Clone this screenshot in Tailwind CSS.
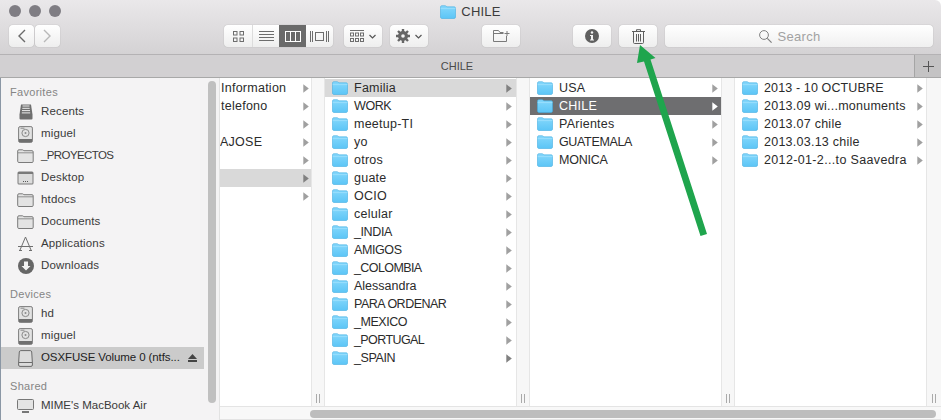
<!DOCTYPE html>
<html><head><meta charset="utf-8"><script src="https://cdn.jsdelivr.net/npm/@tailwindcss/browser@4"></script></head>
<body class="m-0 overflow-hidden bg-white">
<svg class="absolute w-0 h-0"><defs>
<linearGradient id="fg" x1="0" y1="0" x2="0" y2="1"><stop offset="0" stop-color="#85d8fc"/><stop offset="1" stop-color="#5cc5f6"/></linearGradient>
<symbol id="f" viewBox="0 0 16 14"><path d="M.5 2.200C.5 1.200 1 .7 2 .7h3.200c.8 0 1 .9 1.800 1.100h7c1 0 1.500.5 1.500 1.500v8.800c0 .9-.5 1.400-1.500 1.400H2c-1 0-1.500-.5-1.500-1.400z" fill="url(#fg)" stroke="#45aee2" stroke-width=".6"/><path d="M.6 3.600h14.800" stroke="#a5e3fd" stroke-width=".7"/></symbol>
<symbol id="a" viewBox="0 0 6 9"><path d="M.3.300 5.800 4.500.3 8.700z" fill="currentColor"/></symbol>
<symbol id="sf" viewBox="0 0 17 14"><path d="M.7 2c0-.8.4-1.200 1.200-1.200h3.600c.7 0 .8.900 1.500.900h8c.8 0 1.200.4 1.200 1.200v9.400c0 .8-.4 1.200-1.200 1.200H1.900c-.8 0-1.200-.4-1.200-1.200z" fill="#e3e3e3" stroke="#7b7b7b"/><path d="M1 3.800h15" stroke="#7b7b7b" stroke-width=".8"/></symbol>
<symbol id="d" viewBox="0 0 15 17"><rect x=".6" y=".6" width="13.800" height="15.800" rx="1.500" fill="#e2e2e2" stroke="#7c7c7c"/><circle cx="7.500" cy="7" r="3.600" fill="none" stroke="#8a8a8a"/><circle cx="7.500" cy="7" r="1" fill="#8a8a8a"/><path d="M2.500 2.200h4" stroke="#8a8a8a"/><rect x="1" y="13" width="13" height="3" fill="#6f6f6f"/></symbol>
</defs></svg>

<div class="relative w-[941px] h-[420px] overflow-hidden bg-white font-['Liberation_Sans',Arial,sans-serif]">
  <!-- title + toolbar -->
  <div class="h-[55px] bg-gradient-to-b from-[#eae8ea] to-[#d4d2d4] border-b border-[#b4b2b4] rounded-tr-md flex flex-col">
    <div class="h-[23px] relative flex items-center justify-center">
      <div class="absolute left-[9px] top-[5px] flex gap-[8px]">
        <div class="w-[12px] h-[12px] rounded-full bg-[#7f7d83]"></div>
        <div class="w-[12px] h-[12px] rounded-full bg-[#7f7d83]"></div>
        <div class="w-[12px] h-[12px] rounded-full bg-[#7f7d83]"></div>
      </div>
      <div class="flex items-center gap-[5px]">
        <svg class="w-[16px] h-[14px]"><use href="#f"/></svg>
        <span class="text-[13px] text-[#3c3c3c] tracking-[.2px]">CHILE</span>
      </div>
    </div>
    <div class="h-[22px] mt-[2px] flex pl-[9px] text-[#6a6a6a]">
      <div class="w-[25px] rounded-[4px] bg-gradient-to-b from-white to-[#eeeeee] shadow-[0_0_1px_#8f8f8f] flex items-center justify-center">
        <svg width="9" height="14" viewBox="0 0 9 14"><path d="M8 1 2 7l6 6" fill="none" stroke="#6a6a6a" stroke-width="1.400"/></svg>
      </div>
      <div class="w-[25px] ml-[1px] rounded-[4px] bg-gradient-to-b from-white to-[#eeeeee] shadow-[0_0_1px_#8f8f8f] flex items-center justify-center">
        <svg width="9" height="14" viewBox="0 0 9 14"><path d="M1 1l6 6-6 6" fill="none" stroke="#b8b8b8" stroke-width="1.400"/></svg>
      </div>
      <div class="ml-[164px] w-[109px] flex rounded-[4px] overflow-hidden bg-gradient-to-b from-white to-[#eeeeee] shadow-[0_0_1px_#8f8f8f]">
        <div class="w-[29px] border-r border-[#dcdcdc] flex items-center justify-center">
          <svg width="11" height="11" viewBox="0 0 11 11" fill="none" stroke="#6d6d6d"><rect x=".5" y=".5" width="3.500" height="3.500"/><rect x="7" y=".5" width="3.500" height="3.500"/><rect x=".5" y="7" width="3.500" height="3.500"/><rect x="7" y="7" width="3.500" height="3.500"/></svg>
        </div>
        <div class="w-[26px] flex items-center justify-center">
          <svg width="15" height="11" viewBox="0 0 15 11" stroke="#6d6d6d"><path d="M0 .5h15M0 3.500h15M0 6.500h15M0 9.500h15"/></svg>
        </div>
        <div class="w-[27px] bg-[#6a6a6a] flex items-center justify-center">
          <svg width="16" height="11" viewBox="0 0 16 11" fill="none" stroke="#fff"><rect x=".5" y=".5" width="15" height="10"/><path d="M5.500 0v11M10.500 0v11"/></svg>
        </div>
        <div class="w-[27px] flex items-center justify-center">
          <svg width="19" height="11" viewBox="0 0 19 11" fill="none" stroke="#6d6d6d"><rect x="5.500" y="1.500" width="8" height="8"/><path d="M.5 0v11M2.500 0v11M16.500 0v11M18.500 0v11"/></svg>
        </div>
      </div>
      <div class="ml-[11px] w-[38px] rounded-[4px] bg-gradient-to-b from-white to-[#eeeeee] shadow-[0_0_1px_#8f8f8f] flex items-center justify-center gap-[5px]">
        <svg width="14" height="13" viewBox="0 0 14 13" fill="none" stroke="#6d6d6d"><path d="M0 .5h14"/><rect x=".5" y="3" width="3" height="3"/><rect x="5.500" y="3" width="3" height="3"/><rect x="10.500" y="3" width="3" height="3"/><rect x=".5" y="8.500" width="3" height="3"/><rect x="5.500" y="8.500" width="3" height="3"/><rect x="10.500" y="8.500" width="3" height="3"/></svg>
        <svg width="7" height="5" viewBox="0 0 7 5"><path d="M.5 1 3.500 4l3-3" fill="none" stroke="#555" stroke-width="1.200"/></svg>
      </div>
      <div class="ml-[8px] w-[38px] rounded-[4px] bg-gradient-to-b from-white to-[#eeeeee] shadow-[0_0_1px_#8f8f8f] flex items-center justify-center gap-[5px]">
        <svg width="14" height="14" viewBox="0 0 14 14"><circle cx="7" cy="7" r="3.500" fill="none" stroke="#666" stroke-width="3"/><path d="M7 0v14M0 7h14M2 2l10 10M12 2 2 12" stroke="#666" stroke-width="2.400"/><circle cx="7" cy="7" r="1.800" fill="#f5f5f5"/></svg>
        <svg width="7" height="5" viewBox="0 0 7 5"><path d="M.5 1 3.500 4l3-3" fill="none" stroke="#555" stroke-width="1.200"/></svg>
      </div>
      <div class="ml-[54px] w-[38px] rounded-[4px] bg-gradient-to-b from-white to-[#eeeeee] shadow-[0_0_1px_#8f8f8f] flex items-center justify-center">
        <svg width="17" height="12" viewBox="0 0 17 12" fill="none" stroke="#7a7a7a"><path d="M.5 11.500V.5h5l1.500 2h3.500M13.500 6v5.500H.5M.5 3.500h10M14 1v5M11.500 3.500h5"/></svg>
      </div>
      <div class="ml-[53px] w-[38px] rounded-[4px] bg-gradient-to-b from-white to-[#eeeeee] shadow-[0_0_1px_#8f8f8f] flex items-center justify-center">
        <svg width="14" height="14" viewBox="0 0 14 14"><circle cx="7" cy="7" r="7" fill="#5f5f5f"/><circle cx="7" cy="3.500" r="1.200" fill="#f3f3f3"/><path d="M5 6h3v4.500h1v1H5v-1h1V7H5z" fill="#f3f3f3"/></svg>
      </div>
      <div class="ml-[8px] w-[38px] rounded-[4px] bg-gradient-to-b from-white to-[#eeeeee] shadow-[0_0_1px_#8f8f8f] flex items-center justify-center">
        <svg width="13" height="15" viewBox="0 0 13 15" fill="none" stroke="#5f5f5f"><path d="M0 2.500h13M4.500 2.500V.7h4v1.800M1.500 2.500v11c0 .6.400 1 1 1h8c.6 0 1-.4 1-1v-11M4.500 5v7.500M6.500 5v7.500M8.500 5v7.500"/></svg>
      </div>
      <div class="ml-[8px] w-[268px] pr-[19px] rounded-[4px] bg-gradient-to-b from-white to-[#f0f0f0] shadow-[0_0_1px_#8f8f8f] flex items-center justify-center gap-[6px] text-[13px] leading-[24px] text-[#a2a2a2] tracking-[.3px]">
        <svg width="13" height="13" viewBox="0 0 13 13" fill="none" stroke="#808080"><circle cx="5" cy="5" r="4.400"/><path d="m8.300 8.300 4.300 4.300" stroke-width="1.200"/></svg>
        <span class="pt-[2px]">Search</span>
      </div>
    </div>
  </div>
  <!-- tab bar -->
  <div class="h-[23px] bg-[#d2d0d2] border-b border-[#a8a8a8] flex">
    <div class="flex-1 text-center text-[11px] leading-[22px] text-[#4a4a4a]">CHILE</div>
    <div class="w-[27px] bg-[#c4c3c4] border-l border-[#a5a5a5] flex items-center justify-center">
      <svg width="11" height="11" viewBox="0 0 11 11" stroke="#555"><path d="M5.500 0v11M0 5.500h11"/></svg>
    </div>
  </div>
  <!-- main -->
  <div class="h-[342px] flex">
    <!-- sidebar -->
    <div class="relative w-[220px] h-full overflow-hidden whitespace-nowrap bg-[#f4f3f4] border-l border-[#8b97a5] border-r border-r-[#e2e2e2] text-[11.500px] text-[#3a3a3a] tracking-[.15px] pt-[7px]">
      <div class="h-[14px] leading-[14px] pl-[9px] text-[11px] text-[#858585] mb-[2px] tracking-[.3px]">Favorites</div>
      <div class="h-[22px] flex items-center"><div class="w-[40px] flex justify-center pl-[9px]"><svg width="14" height="16" viewBox="0 0 14 16"><path d="M2 .5h10l1.500 10v4a1 1 0 0 1-1 1h-11a1 1 0 0 1-1-1v-4z" fill="#6e6e6e"/><path d="M3.500 2h7M3.300 4.300h7.400M3 6.600h8M2.800 8.900h8.400" stroke="#eee"/></svg></div><span>Recents</span></div>
      <div class="h-[22px] flex items-center"><div class="w-[40px] flex justify-center pl-[9px]"><svg width="15" height="17"><use href="#d"/></svg></div><span>miguel</span></div>
      <div class="h-[22px] flex items-center"><div class="w-[40px] flex justify-center pl-[9px]"><svg width="17" height="14"><use href="#sf"/></svg></div><span class="tracking-[-.6px]">_PROYECTOS</span></div>
      <div class="h-[22px] flex items-center"><div class="w-[40px] flex justify-center pl-[9px]"><svg width="17" height="14" viewBox="0 0 17 14"><rect x=".5" y=".5" width="16" height="13" rx="1.500" fill="#7a7a7a"/><rect x="1.500" y="3" width="14" height="9.500" fill="#dcdcdc"/><path d="M6 10.500h1M8 10.500h1M10 10.500h1" stroke="#555"/></svg></div><span>Desktop</span></div>
      <div class="h-[22px] flex items-center"><div class="w-[40px] flex justify-center pl-[9px]"><svg width="17" height="14"><use href="#sf"/></svg></div><span>htdocs</span></div>
      <div class="h-[22px] flex items-center"><div class="w-[40px] flex justify-center pl-[9px]"><svg width="17" height="14"><use href="#sf"/></svg></div><span>Documents</span></div>
      <div class="h-[22px] flex items-center"><div class="w-[40px] flex justify-center pl-[9px]"><svg width="17" height="16" viewBox="0 0 17 16" fill="none" stroke="#6f6f6f"><path d="M8.500 1 3 14M8.500 1l5.500 13M1 10.500h15M5 14.500h-3M15 14.500h-3"/></svg></div><span>Applications</span></div>
      <div class="h-[22px] flex items-center"><div class="w-[40px] flex justify-center pl-[9px]"><svg width="16" height="16" viewBox="0 0 16 16"><circle cx="8" cy="8" r="8" fill="#666"/><path d="M6 3.500h4V8h2.500L8 12.500 3.500 8H6z" fill="#f4f4f4"/></svg></div><span>Downloads</span></div>
      <div class="h-[14px] leading-[14px] pl-[9px] text-[11px] text-[#858585] mt-[10px] mb-[2px] tracking-[.3px]">Devices</div>
      <div class="h-[22px] flex items-center"><div class="w-[40px] flex justify-center pl-[9px]"><svg width="15" height="17"><use href="#d"/></svg></div><span>hd</span></div>
      <div class="h-[22px] flex items-center"><div class="w-[40px] flex justify-center pl-[9px]"><svg width="15" height="17"><use href="#d"/></svg></div><span>miguel</span></div>
      <div class="h-[22px] w-[203px] bg-[#cbcbcb] flex items-center text-[#222]"><div class="w-[40px] flex justify-center pl-[9px]"><svg width="15" height="17" viewBox="0 0 15 17"><path d="M2.800.6h9.400c.8 0 1.300.5 1.500 1.300l.7 11.100v2c0 .8-.5 1.400-1.400 1.400H2c-.9 0-1.400-.6-1.400-1.400v-2l.7-11.100C1.500 1.100 2 .6 2.800.6z" fill="#dcdcdc" stroke="#6a6a6a"/><path d="M1 12.500h13" stroke="#6a6a6a"/></svg></div><span class="flex-1 tracking-[-.1px]">OSXFUSE Volume 0 (ntfs...</span><svg class="mr-[7px]" width="9" height="8" viewBox="0 0 9 8" fill="#444"><path d="M4.500 0 9 5H0zM0 6h9v2H0z"/></svg></div>
      <div class="h-[14px] leading-[14px] pl-[9px] text-[11px] text-[#858585] mt-[10px] mb-[2px] tracking-[.3px]">Shared</div>
      <div class="h-[22px] flex items-center"><div class="w-[40px] flex justify-center pl-[9px]"><svg width="17" height="14" viewBox="0 0 17 14"><rect x=".5" y=".5" width="16" height="10" rx="1" fill="#e4e4e4" stroke="#777"/><path d="M5 13h7" stroke="#777" stroke-width="2"/></svg></div><span class="tracking-[0px]">MIME's MacBook Air</span></div>
      <div class="h-[22px] flex items-center"><div class="w-[40px] flex justify-center pl-[9px]"><svg width="17" height="14" viewBox="0 0 17 14"><rect x=".5" y=".5" width="16" height="10" rx="1" fill="#e4e4e4" stroke="#777"/><path d="M5 13h7" stroke="#777" stroke-width="2"/></svg></div></div>
      <div class="absolute left-[207px] top-[3px] w-[8px] h-[322px] rounded-full bg-[#c0c0c0]"></div>
    </div>
    <!-- browser -->
    <div class="flex-1 min-w-0 flex flex-col text-[12.500px] text-[#2b2b2b] tracking-[.25px]">
      <div class="h-[328px] flex">
        <!-- col1 -->
        <div class="w-[91px] pt-px shrink-0">
          <div class="h-[18px] flex items-center justify-between pl-px pr-[2px]"><span>Information</span><svg class="w-[6px] h-[9px] text-[#a0a0a0]"><use href="#a"/></svg></div>
          <div class="h-[18px] flex items-center justify-between pl-px pr-[2px]"><span>telefono</span><svg class="w-[6px] h-[9px] text-[#a0a0a0]"><use href="#a"/></svg></div>
          <div class="h-[18px] flex items-center justify-end pr-[2px]"><svg class="w-[6px] h-[9px] text-[#a0a0a0]"><use href="#a"/></svg></div>
          <div class="h-[18px] flex items-center justify-between pr-[2px]"><span>AJOSE</span><svg class="w-[6px] h-[9px] text-[#a0a0a0]"><use href="#a"/></svg></div>
          <div class="h-[18px] flex items-center justify-end pr-[2px]"><svg class="w-[6px] h-[9px] text-[#a0a0a0]"><use href="#a"/></svg></div>
          <div class="h-[18px] flex items-center justify-end pr-[2px] bg-[#d9d9d9]"><svg class="w-[6px] h-[9px] text-[#808080]"><use href="#a"/></svg></div>
          <div class="h-[18px] flex items-center justify-end pr-[2px]"><svg class="w-[6px] h-[9px] text-[#a0a0a0]"><use href="#a"/></svg></div>
        </div>
        <!-- div -->
        <div class="w-[14px] shrink-0 bg-[#f7f7f7] border-x border-[#e6e6e6] flex items-end justify-center pb-[3px]"><svg width="4" height="9" stroke="#aaa"><path d="M.5 0v9M3.500 0v9"/></svg></div>
        <!-- col2 -->
        <div class="w-[191px] pt-px shrink-0">
          <div class="h-[18px] flex items-center pl-[7px] pr-[4px] bg-[#d9d9d9]"><svg class="w-[16px] h-[14px] mr-[6px]"><use href="#f"/></svg><span class="flex-1">Familia</span><svg class="w-[6px] h-[9px] text-[#808080]"><use href="#a"/></svg></div>
          <div class="h-[18px] flex items-center pl-[7px] pr-[4px]"><svg class="w-[16px] h-[14px] mr-[6px]"><use href="#f"/></svg><span class="flex-1 tracking-[-.4px]">WORK</span><svg class="w-[6px] h-[9px] text-[#a0a0a0]"><use href="#a"/></svg></div>
          <div class="h-[18px] flex items-center pl-[7px] pr-[4px]"><svg class="w-[16px] h-[14px] mr-[6px]"><use href="#f"/></svg><span class="flex-1">meetup-TI</span><svg class="w-[6px] h-[9px] text-[#a0a0a0]"><use href="#a"/></svg></div>
          <div class="h-[18px] flex items-center pl-[7px] pr-[4px]"><svg class="w-[16px] h-[14px] mr-[6px]"><use href="#f"/></svg><span class="flex-1">yo</span><svg class="w-[6px] h-[9px] text-[#a0a0a0]"><use href="#a"/></svg></div>
          <div class="h-[18px] flex items-center pl-[7px] pr-[4px]"><svg class="w-[16px] h-[14px] mr-[6px]"><use href="#f"/></svg><span class="flex-1">otros</span><svg class="w-[6px] h-[9px] text-[#a0a0a0]"><use href="#a"/></svg></div>
          <div class="h-[18px] flex items-center pl-[7px] pr-[4px]"><svg class="w-[16px] h-[14px] mr-[6px]"><use href="#f"/></svg><span class="flex-1">guate</span><svg class="w-[6px] h-[9px] text-[#a0a0a0]"><use href="#a"/></svg></div>
          <div class="h-[18px] flex items-center pl-[7px] pr-[4px]"><svg class="w-[16px] h-[14px] mr-[6px]"><use href="#f"/></svg><span class="flex-1">OCIO</span><svg class="w-[6px] h-[9px] text-[#a0a0a0]"><use href="#a"/></svg></div>
          <div class="h-[18px] flex items-center pl-[7px] pr-[4px]"><svg class="w-[16px] h-[14px] mr-[6px]"><use href="#f"/></svg><span class="flex-1">celular</span><svg class="w-[6px] h-[9px] text-[#a0a0a0]"><use href="#a"/></svg></div>
          <div class="h-[18px] flex items-center pl-[7px] pr-[4px]"><svg class="w-[16px] h-[14px] mr-[6px]"><use href="#f"/></svg><span class="flex-1 tracking-[-.4px]">_INDIA</span><svg class="w-[6px] h-[9px] text-[#a0a0a0]"><use href="#a"/></svg></div>
          <div class="h-[18px] flex items-center pl-[7px] pr-[4px]"><svg class="w-[16px] h-[14px] mr-[6px]"><use href="#f"/></svg><span class="flex-1 tracking-[-.4px]">AMIGOS</span><svg class="w-[6px] h-[9px] text-[#a0a0a0]"><use href="#a"/></svg></div>
          <div class="h-[18px] flex items-center pl-[7px] pr-[4px]"><svg class="w-[16px] h-[14px] mr-[6px]"><use href="#f"/></svg><span class="flex-1 tracking-[-.6px]">_COLOMBIA</span><svg class="w-[6px] h-[9px] text-[#a0a0a0]"><use href="#a"/></svg></div>
          <div class="h-[18px] flex items-center pl-[7px] pr-[4px]"><svg class="w-[16px] h-[14px] mr-[6px]"><use href="#f"/></svg><span class="flex-1 tracking-[0px]">Alessandra</span><svg class="w-[6px] h-[9px] text-[#a0a0a0]"><use href="#a"/></svg></div>
          <div class="h-[18px] flex items-center pl-[7px] pr-[4px]"><svg class="w-[16px] h-[14px] mr-[6px]"><use href="#f"/></svg><span class="flex-1 tracking-[-.5px]">PARA ORDENAR</span><svg class="w-[6px] h-[9px] text-[#a0a0a0]"><use href="#a"/></svg></div>
          <div class="h-[18px] flex items-center pl-[7px] pr-[4px]"><svg class="w-[16px] h-[14px] mr-[6px]"><use href="#f"/></svg><span class="flex-1 tracking-[-.45px]">_MEXICO</span><svg class="w-[6px] h-[9px] text-[#a0a0a0]"><use href="#a"/></svg></div>
          <div class="h-[18px] flex items-center pl-[7px] pr-[4px]"><svg class="w-[16px] h-[14px] mr-[6px]"><use href="#f"/></svg><span class="flex-1 tracking-[-.6px]">_PORTUGAL</span><svg class="w-[6px] h-[9px] text-[#a0a0a0]"><use href="#a"/></svg></div>
          <div class="h-[18px] flex items-center pl-[7px] pr-[4px]"><svg class="w-[16px] h-[14px] mr-[6px]"><use href="#f"/></svg><span class="flex-1 tracking-[-.4px]">_SPAIN</span><svg class="w-[6px] h-[9px] text-[#808080]"><use href="#a"/></svg></div>
        </div>
        <div class="w-[14px] shrink-0 bg-[#f7f7f7] border-x border-[#e6e6e6] flex items-end justify-center pb-[3px]"><svg width="4" height="9" stroke="#aaa"><path d="M.5 0v9M3.500 0v9"/></svg></div>
        <!-- col3 -->
        <div class="w-[191px] pt-px shrink-0">
          <div class="h-[18px] flex items-center pl-[7px] pr-[3px]"><svg class="w-[16px] h-[14px] mr-[6px]"><use href="#f"/></svg><span class="flex-1">USA</span><svg class="w-[6px] h-[9px] text-[#a0a0a0]"><use href="#a"/></svg></div>
          <div class="h-[18px] flex items-center pl-[7px] pr-[3px] bg-[#6e6e70] text-white"><svg class="w-[16px] h-[14px] mr-[6px]"><use href="#f"/></svg><span class="flex-1">CHILE</span><svg class="w-[6px] h-[9px] text-white"><use href="#a"/></svg></div>
          <div class="h-[18px] flex items-center pl-[7px] pr-[3px]"><svg class="w-[16px] h-[14px] mr-[6px]"><use href="#f"/></svg><span class="flex-1">PArientes</span><svg class="w-[6px] h-[9px] text-[#a0a0a0]"><use href="#a"/></svg></div>
          <div class="h-[18px] flex items-center pl-[7px] pr-[3px]"><svg class="w-[16px] h-[14px] mr-[6px]"><use href="#f"/></svg><span class="flex-1 tracking-[-.35px]">GUATEMALA</span><svg class="w-[6px] h-[9px] text-[#a0a0a0]"><use href="#a"/></svg></div>
          <div class="h-[18px] flex items-center pl-[7px] pr-[3px]"><svg class="w-[16px] h-[14px] mr-[6px]"><use href="#f"/></svg><span class="flex-1 tracking-[-.25px]">MONICA</span><svg class="w-[6px] h-[9px] text-[#a0a0a0]"><use href="#a"/></svg></div>
        </div>
        <div class="w-[14px] shrink-0 bg-[#f7f7f7] border-x border-[#e6e6e6] flex items-end justify-center pb-[3px]"><svg width="4" height="9" stroke="#aaa"><path d="M.5 0v9M3.500 0v9"/></svg></div>
        <!-- col4 -->
        <div class="w-[191px] pt-px shrink-0">
          <div class="h-[18px] flex items-center pl-[7px] pr-[3px]"><svg class="w-[16px] h-[14px] mr-[6px]"><use href="#f"/></svg><span class="flex-1 tracking-[.13px]">2013 - 10 OCTUBRE</span><svg class="w-[6px] h-[9px] text-[#a0a0a0]"><use href="#a"/></svg></div>
          <div class="h-[18px] flex items-center pl-[7px] pr-[3px]"><svg class="w-[16px] h-[14px] mr-[6px]"><use href="#f"/></svg><span class="flex-1">2013.09 wi...monuments</span><svg class="w-[6px] h-[9px] text-[#a0a0a0]"><use href="#a"/></svg></div>
          <div class="h-[18px] flex items-center pl-[7px] pr-[3px]"><svg class="w-[16px] h-[14px] mr-[6px]"><use href="#f"/></svg><span class="flex-1">2013.07 chile</span><svg class="w-[6px] h-[9px] text-[#a0a0a0]"><use href="#a"/></svg></div>
          <div class="h-[18px] flex items-center pl-[7px] pr-[3px]"><svg class="w-[16px] h-[14px] mr-[6px]"><use href="#f"/></svg><span class="flex-1">2013.03.13 chile</span><svg class="w-[6px] h-[9px] text-[#a0a0a0]"><use href="#a"/></svg></div>
          <div class="h-[18px] flex items-center pl-[7px] pr-[3px]"><svg class="w-[16px] h-[14px] mr-[6px]"><use href="#f"/></svg><span class="flex-1 tracking-[.35px]">2012-01-2...to Saavedra</span><svg class="w-[6px] h-[9px] text-[#a0a0a0]"><use href="#a"/></svg></div>
        </div>
        <div class="flex-1 bg-[#f7f7f7] border-l border-[#e6e6e6] flex items-end justify-center pb-[3px]"><svg width="4" height="9" stroke="#aaa"><path d="M.5 0v9M3.500 0v9"/></svg></div>
      </div>
      <div class="h-[14px] bg-[#f8f8f8] border-y border-[#e4e4e4] pl-[90px] pr-[5px] pt-[3px]">
        <div class="h-[8px] rounded-full bg-[#bdbdbd]"></div>
      </div>
    </div>
  </div>
  <!-- annotation arrow -->
  <svg class="absolute left-0 top-0 pointer-events-none" width="941" height="420" viewBox="0 0 941 420"><path d="M640 45 655.500 58 650.500 59.500 707 234 700.500 236 644 61.500 637 63z" fill="#1fa54d"/></svg>
</div>
</body></html>
